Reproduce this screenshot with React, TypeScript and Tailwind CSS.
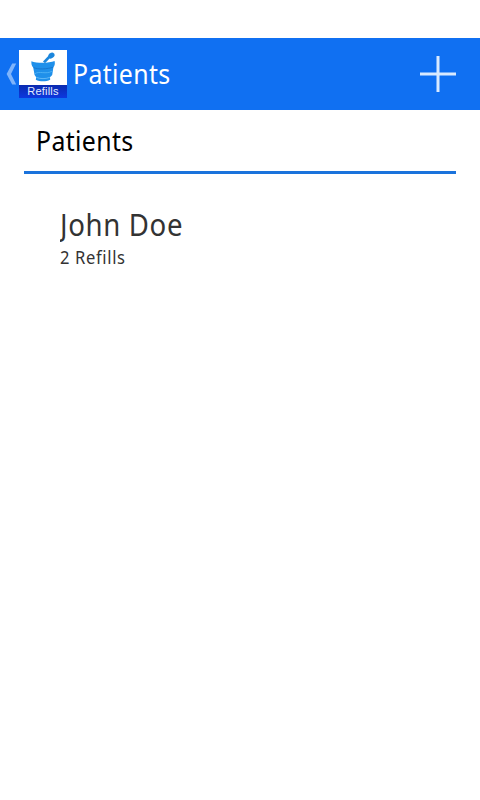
const patients = [{ name: 'John Doe', refills: 2 }];

function AppIcon() {
  return (
    <div className="flex h-12 w-12 flex-col bg-white">
      <svg viewBox="0 0 48 35" className="h-[35px] w-12">
        {/* pestle */}
        <path d="M25 12.4 L30.5 6.6" stroke="#1b86dc" strokeWidth="2.8" />
        <ellipse cx="32.4" cy="5.6" rx="3.4" ry="2.6" fill="#1b86dc" transform="rotate(-40 32.4 5.6)" />
        {/* mortar */}
        <path
          d="M12.4 11.2 C18 13.4 30 13.2 35.6 11 C36.2 13.6 35.8 16 34.4 17.2 L33.2 25 L31 27.2 L31.2 29.8 C27 31.8 21 31.8 16.8 29.8 L17.2 27.2 L15.6 25 L14.2 17.6 C12.6 16 12.2 13.6 12.4 11.2 Z"
          fill="#1f90ea"
        />
        <path d="M14.6 17.6 C19 19.6 28 19.2 34.2 17.2" stroke="#1470c8" strokeWidth="0.8" fill="none" />
        <path d="M15.8 23.8 C20 20.5 27 24.8 33 21.2" stroke="#55b6f6" strokeWidth="0.8" fill="none" />
        <path d="M17.4 27.4 C21 29 27 29 30.8 27.4" stroke="#7cc8fa" strokeWidth="0.7" fill="none" />
      </svg>
      <div className="flex h-[13px] items-center justify-center bg-linear-to-b from-[#0a2bb0] to-[#0c38e0] font-['Liberation_Sans',sans-serif] text-[11px] leading-none tracking-[0.2px] text-[#e4ecff]">
        Refills
      </div>
    </div>
  );
}

function ActionBar() {
  return (
    <header className="flex h-[72px] items-center bg-[#1070f2] pr-6">
      <svg viewBox="0 0 19 24" className="h-6 w-[19px]">
        <path d="M12.2 1.5 H16.2 L11 12 L16.2 22.5 H12.2 L6.6 12 Z" fill="#7fb4fb" />
      </svg>
      <AppIcon />
      <h1 className="ml-1.5 origin-left scale-x-92 text-[27px] leading-9 tracking-[0.4px] text-white">Patients</h1>
      <button className="ml-auto" aria-label="Add patient">
        <svg viewBox="0 0 36 36" className="h-9 w-9">
          <path d="M18 0 V36 M0 18 H36" stroke="#d9eaff" strokeWidth="3" />
        </svg>
      </button>
    </header>
  );
}

export default function App() {
  return (
    <div className="min-h-screen bg-white pt-[38px] font-['Noto_Sans',sans-serif]">
      <ActionBar />
      <main className="px-6">
        <h2 className="h-16 border-b-3 border-[#1a73dc] px-3 pt-3 text-[27px] leading-[38px] tracking-[0.4px] text-black">
          <span className="inline-block origin-left scale-x-92">Patients</span>
        </h2>
        <ul className="px-9 pt-7">
          {patients.map((patient) => (
            <li key={patient.name} className="text-[#333333]">
              <div className="origin-left scale-x-92 overflow-hidden text-[30px] leading-[45px] tracking-[0.7px]">
                {patient.name}
              </div>
              <div className="origin-left scale-x-92 text-lg leading-5 tracking-[0.7px]">{patient.refills} Refills</div>
            </li>
          ))}
        </ul>
      </main>
    </div>
  );
}
